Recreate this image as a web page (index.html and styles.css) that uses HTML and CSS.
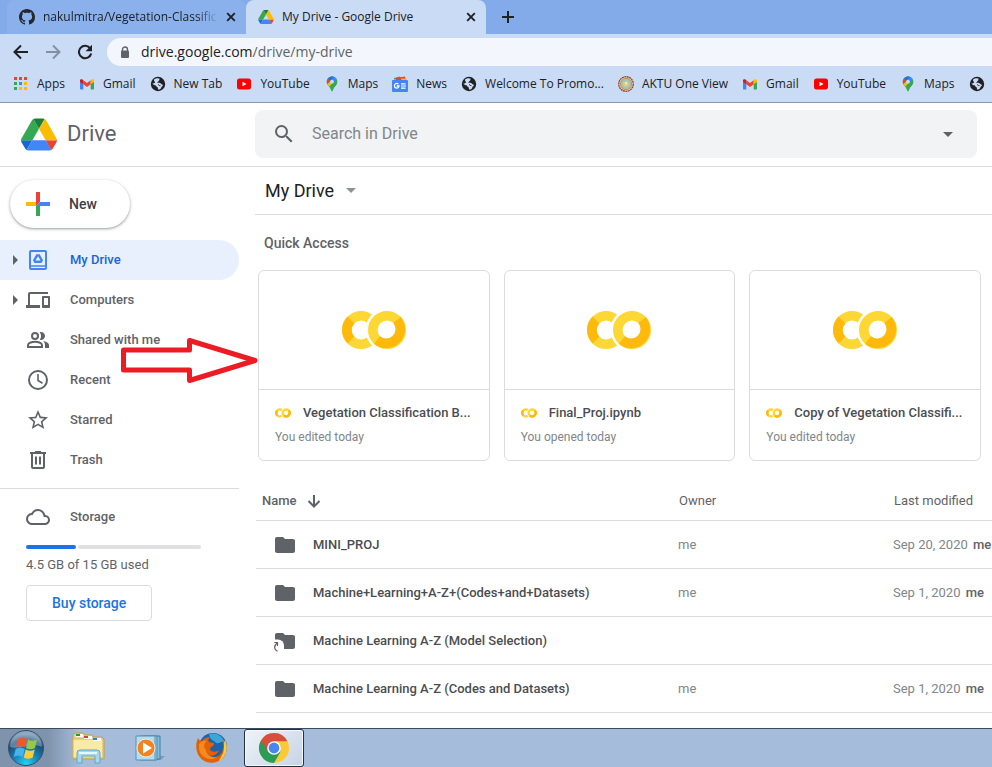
FILE: index.html
```html
<!DOCTYPE html>
<html lang="en">
<head>
<meta charset="utf-8">
<title>My Drive - Google Drive</title>
<link rel="stylesheet" href="styles.css">
</head>
<body>
<svg class="sprite" aria-hidden="true">
  <symbol id="drive" viewBox="0 0 87.3 78">
    <path d="m6.6 66.85 3.85 6.65c.8 1.4 1.95 2.5 3.3 3.3l13.75-23.8h-27.5c0 1.55.4 3.1 1.2 4.5z" fill="#1967d2"/>
    <path d="m43.65 25-13.75-23.8c-1.35.8-2.5 1.9-3.3 3.3l-25.4 44a9.06 9.06 0 0 0-1.2 4.5h27.5z" fill="#34a853"/>
    <path d="m73.55 76.8c1.35-.8 2.5-1.9 3.3-3.3l1.6-2.75 7.65-13.25c.8-1.4 1.2-2.95 1.2-4.5h-27.5l5.85 11.5z" fill="#ea4335"/>
    <path d="m43.65 25 13.75-23.8c-1.35-.8-2.9-1.2-4.5-1.2h-18.5c-1.6 0-3.15.45-4.5 1.2z" fill="#188038"/>
    <path d="m59.8 53h-32.3l-13.75 23.8c1.35.8 2.9 1.2 4.5 1.2h50.8c1.6 0 3.15-.45 4.5-1.2z" fill="#4285f4"/>
    <path d="m73.4 26.5-12.7-22c-.8-1.4-1.95-2.5-3.3-3.3l-13.75 23.8 16.15 28h27.45c0-1.55-.4-3.1-1.2-4.5z" fill="#fbbc04"/>
  </symbol>
  <symbol id="close" viewBox="0 0 10 10"><path d="M1.2 1.2l7.6 7.6M8.8 1.2L1.2 8.8" stroke="#202124" stroke-width="1.9"/></symbol>
  <symbol id="gmail" viewBox="0 0 16 16">
    <path d="M1 4v8.5c0 .6.400 1 1 1h2.300V6.500z" fill="#4285f4"/>
    <path d="M15 4v8.500c0 .6-.4 1-1 1h-2.300V6.500z" fill="#34a853"/>
    <path d="M4.300 4.300v4L8 11l3.700-2.700v-4L8 7z" fill="#ea4335"/>
    <path d="M1 4.200v1.700l3.300 2.400v-4l-.8-.7C2.500 2.700 1 3.200 1 4.200z" fill="#c5221f"/>
    <path d="M15 4.200v1.700l-3.300 2.400v-4l.8-.7c1-.9 2.500-.4 2.500.6z" fill="#fbbc04"/>
  </symbol>
  <symbol id="youtube" viewBox="0 0 16 16"><rect x="1" y="2.500" width="14" height="11" rx="2.500" fill="#f00"/><path d="M6.500 5.700v4.600l4-2.300z" fill="#fff"/></symbol>
  <symbol id="globe" viewBox="0 0 16 16">
    <circle cx="8" cy="8" r="7.200" fill="#202124"/>
    <path d="M4 3.500C6 1.800 8.700 2 9.800 2.700 9 3.400 9.700 4.300 8.700 4.900 7.600 5.400 7.800 6.500 7 6.900c1.500-.3 3.200-.2 4 .8.8.9 2 .4 1.800 1.800-.2 1-1.300.8-1.500 1.900-.2 1.200-1.500 2.300-3 2.200-.8-.2 0-1.500-.6-2.200C7 10.800 5.900 10.500 6 9.500 4.300 9.300 2.700 8.300 2.200 7.200c1.200.4 2.600.2 2.800-.6C5.400 5.600 3.500 5 4 3.500z" fill="#cadbf5"/>
    <path d="M8.500 8.400c-.4.700 1 1.400 1.900 1.200" stroke="#202124" fill="none"/>
  </symbol>
  <symbol id="maps" viewBox="0 0 16 16">
    <path d="M8 .5C5 .5 2.700 2.800 2.700 5.700c0 2.300 1.200 3.500 2.700 5.100C7 12.500 7.200 15.500 8 15.500s1-3 2.600-4.700c1.500-1.600 2.700-2.800 2.700-5.100C13.300 2.800 11 .5 8 .5z" fill="#34a853"/>
    <path d="M3.300 8c.5 1.200 1.300 2 2.100 2.800l4.300-5.100L8 4.200z" fill="#fbbc04"/>
    <path d="M4 2.400C2.700 4 2.400 6.100 3.300 8l3.200-3.700z" fill="#ea4335"/>
    <path d="M4 2.400C5.700.4 8 .1 9.800.8L6.500 4.700z" fill="#1a73e8"/>
    <path d="M9.800.8c1.400.5 2.400 1.400 3 2.700L9.600 7 6.500 4.700z" fill="#4285f4"/>
    <path d="M13 3.900c.9 3-.8 5-2.400 6.900C9.400 12 9 13.500 8.600 14.800 7.300 15 7.200 12.800 5.400 10.800z" fill="#34a853"/>
    <circle cx="8" cy="5.700" r="1.900" fill="#cadbf5"/>
  </symbol>
  <symbol id="news" viewBox="0 0 16 16">
    <path d="M2 2l6-1.500 2 3H2z" fill="#34a853"/><path d="M4 2l9-1.600 1 4H4z" fill="#ea4335"/><path d="M9 2.500h5.500V5H9z" fill="#fbbc04"/>
    <rect y="4" width="16" height="12" rx="1" fill="#4285f4"/>
    <path d="M6.400 8.200A2.300 2.300 0 1 0 7 10H4.700" stroke="#fff" stroke-width="1.300" fill="none"/><path d="M9 7.800h4.500M9 10h5M9 12.200h4.500" stroke="#fff" stroke-width="1.200"/>
  </symbol>
  <symbol id="seal" viewBox="0 0 16 16">
    <circle cx="8" cy="8" r="7.300" fill="#e4d4b0" stroke="#96403c" stroke-width="1.300" stroke-dasharray="2 .5"/><circle cx="8" cy="8" r="5.600" fill="#9ec4c8" stroke="#bf9540"/><circle cx="8" cy="8" r="2.700" fill="#e8cd72"/><circle cx="8" cy="7.300" r="1" fill="#fff5c8"/>
  </symbol>
  <symbol id="colab" viewBox="0 0 64 38">
    <g fill="none" stroke-width="9.600">
      <circle cx="19" cy="19" r="14.200" stroke="#fdd835"/><path d="M9 29A14.200 14.200 0 0 1 9 9" stroke="#ffb90a"/>
      <circle cx="45" cy="19" r="21.500" fill="#fff" stroke="none"/>
      <circle cx="45" cy="19" r="14.200" stroke="#fdd835"/><path d="M55 9A14.200 14.200 0 0 1 35 29" stroke="#ffb90a"/>
    </g>
  </symbol>
  <symbol id="folder" viewBox="0 0 24 24"><path d="M10 4H4c-1.100 0-2 .9-2 2v12c0 1.100.9 2 2 2h16c1.100 0 2-.9 2-2V8c0-1.100-.9-2-2-2h-8l-2-2z" fill="#5f6368"/></symbol>
  <symbol id="caret" viewBox="0 0 5 10"><path d="M0 0l5 5-5 5z" fill="#5f6368"/></symbol>
</svg>

<header class="browser">
  <div class="tabs">
    <div class="tab">
      <svg class="icon16" viewBox="0 0 16 16"><path fill="#24292e" d="M8 0C3.580 0 0 3.580 0 8c0 3.540 2.290 6.530 5.470 7.590.4.070.55-.17.55-.38 0-.19-.01-.82-.01-1.490-2.010.37-2.530-.49-2.690-.94-.09-.23-.48-.94-.82-1.130-.28-.15-.68-.52-.01-.53.63-.01 1.080.58 1.230.82.72 1.210 1.870.87 2.330.66.07-.52.28-.87.51-1.070-1.780-.2-3.640-.89-3.640-3.950 0-.87.31-1.590.82-2.150-.08-.2-.36-1.020.08-2.120 0 0 .67-.21 2.200.82.64-.18 1.320-.27 2-.27s1.360.09 2 .27c1.530-1.040 2.200-.82 2.200-.82.44 1.100.16 1.920.08 2.120.51.56.82 1.270.82 2.150 0 3.070-1.870 3.750-3.650 3.950.29.25.54.73.54 1.480 0 1.070-.01 1.930-.01 2.200 0 .21.15.46.55.38A8.010 8.010 0 0 0 16 8c0-4.420-3.580-8-8-8z"/></svg>
      <span class="tab-title faded">nakulmitra/Vegetation-Classificat</span>
      <button class="plain" aria-label="Close tab"><svg class="icon10"><use href="#close"/></svg></button>
    </div>
    <div class="tab active">
      <svg class="tab-drive"><use href="#drive"/></svg>
      <span class="tab-title">My Drive - Google Drive</span>
      <button class="plain" aria-label="Close tab"><svg class="icon10"><use href="#close"/></svg></button>
    </div>
    <button class="plain new-tab" aria-label="New tab"><svg width="12" height="12" viewBox="0 0 12 12"><path d="M6 0v12M0 6h12" stroke="#202124" stroke-width="2"/></svg></button>
  </div>
  <div class="toolbar">
    <button class="plain" aria-label="Back"><svg width="16" height="16" viewBox="0 0 16 16" fill="none" stroke="#202124" stroke-width="2"><path d="M15 8H2M8 1.500L1.500 8 8 14.500"/></svg></button>
    <button class="plain" aria-label="Forward"><svg width="16" height="16" viewBox="0 0 16 16" fill="none" stroke="#858fa1" stroke-width="2"><path d="M1 8h13M8 1.500L14.500 8 8 14.500"/></svg></button>
    <button class="plain" aria-label="Reload"><svg width="16" height="16" viewBox="0 0 16 16"><path d="M13.300 4.500A6.200 6.200 0 1 0 14.200 9.500" fill="none" stroke="#202124" stroke-width="2.100"/><path d="M15 .7v6.500H8.500z" fill="#202124"/></svg></button>
    <div class="omnibox">
      <svg width="10" height="13" viewBox="0 0 10 13"><path d="M2.500 6V3.500a2.500 2.500 0 0 1 5 0V6" fill="none" stroke="#5f6368" stroke-width="1.400"/><rect x="1" y="4.500" width="8" height="7.500" rx="1" fill="#5f6368"/></svg>
      <a class="url" href="#">drive.google.com<span>/drive/my-drive</span></a>
    </div>
  </div>
  <nav class="bookmarks" aria-label="Bookmarks">
    <a href="#"><svg class="icon16" viewBox="0 0 16 16"><path fill="#ea4335" d="M1 1h3v3H1zM6 1h3v3H6zM11 1h3v3h-3z"/><path fill="#34a853" d="M1 6h3v3H1zM1 11h3v3H1z"/><path fill="#4285f4" d="M6 6h3v3H6z"/><path fill="#fbbc04" d="M11 6h3v3h-3zM6 11h3v3H6zM11 11h3v3h-3z"/></svg>Apps</a>
    <a href="#"><svg class="icon16"><use href="#gmail"/></svg>Gmail</a>
    <a href="#"><svg class="icon16"><use href="#globe"/></svg>New Tab</a>
    <a href="#"><svg class="icon16"><use href="#youtube"/></svg>YouTube</a>
    <a href="#"><svg class="icon16"><use href="#maps"/></svg>Maps</a>
    <a href="#"><svg class="icon16"><use href="#news"/></svg>News</a>
    <a href="#"><svg class="icon16"><use href="#globe"/></svg>Welcome To Promo...</a>
    <a href="#"><svg class="icon16"><use href="#seal"/></svg>AKTU One View</a>
    <a href="#"><svg class="icon16"><use href="#gmail"/></svg>Gmail</a>
    <a href="#"><svg class="icon16"><use href="#youtube"/></svg>YouTube</a>
    <a href="#"><svg class="icon16"><use href="#maps"/></svg>Maps</a>
    <a href="#" aria-label="New tab"><svg class="icon16"><use href="#globe"/></svg></a>
  </nav>
</header>

<div class="app-bar">
  <a class="brand" href="#"><svg class="brand-logo"><use href="#drive"/></svg>Drive</a>
  <form class="search">
    <button class="plain" type="button" aria-label="Search"><svg width="24" height="24" viewBox="0 0 24 24"><path fill="#5f6368" d="M15.500 14h-.79l-.28-.27A6.471 6.471 0 0 0 16 9.500 6.500 6.500 0 1 0 9.500 16c1.610 0 3.090-.59 4.230-1.570l.27.28v.79l5 4.990L20.490 19l-4.990-5zm-6 0C7.010 14 5 11.990 5 9.500S7.010 5 9.500 5 14 7.010 14 9.500 11.990 14 9.500 14z"/></svg></button>
    <input type="search" aria-label="Search in Drive" placeholder="Search in Drive">
    <button class="plain" type="button" aria-label="Search options"><svg width="10" height="5" viewBox="0 0 10 5"><path d="M0 0h10L5 5z" fill="#5f6368"/></svg></button>
  </form>
</div>

<div class="workspace">
  <aside class="sidebar">
    <button class="new-button"><svg width="24" height="24" viewBox="0 0 24 24"><path d="M10 0h4v10l-4 4z" fill="#ea4335"/><path d="M14 10h10v4H10z" fill="#4285f4"/><path d="M10 14h4v10h-4z" fill="#34a853"/><path d="M0 10h10v4H0z" fill="#fbbc04"/></svg>New</button>
    <nav class="nav">
      <a class="current" href="#"><svg class="caret"><use href="#caret"/></svg><svg class="icon24" viewBox="0 0 24 24" fill="none" stroke="#4285f4" stroke-width="2"><rect x="4" y="3" width="16" height="18" rx="1"/><path d="M4 18h16" stroke-width="1.500"/><path d="M11 7.500h2l2.700 4.700-.9 1.600H9.200l-.9-1.600z" stroke-width="2.400"/></svg>My Drive</a>
      <a href="#"><svg class="caret"><use href="#caret"/></svg><svg class="icon24" viewBox="0 0 24 24"><path fill="#5f6368" d="M4 6h18V4H4c-1.100 0-2 .9-2 2v11H0v3h14v-3H4V6zm19 2h-6c-.55 0-1 .45-1 1v10c0 .55.45 1 1 1h6c.55 0 1-.45 1-1V9c0-.55-.45-1-1-1zm-1 9h-4v-7h4v7z"/></svg>Computers</a>
      <a href="#"><span class="caret"></span><svg class="icon24" viewBox="0 0 24 24"><g fill="none" stroke="#5f6368" stroke-width="2"><circle cx="9" cy="8" r="3"/><path d="M2 19v-2c0-2.200 4.500-3.300 7-3.300s7 1.100 7 3.300v2z"/></g><path d="M15 4c2.300 0 4 1.800 4 4s-1.700 4-4 4c-.4 0-.8-.1-1.200-.2C15.500 9.600 15.500 6.500 13.700 4.200 14.100 4.100 14.600 4 15 4zM17 13c2.700.5 6 1.800 6 4v3h-4v-3c0-1.600-.8-3-2-4z" fill="#5f6368"/></svg>Shared with me</a>
      <a href="#"><span class="caret"></span><svg class="icon24" viewBox="0 0 24 24" fill="none" stroke="#5f6368" stroke-width="2"><circle cx="12" cy="12" r="9"/><path d="M12 6v6.500l4.500 2.700" stroke-width="1.600"/></svg>Recent</a>
      <a href="#"><span class="caret"></span><svg class="icon24" viewBox="0 0 24 24"><path fill="#5f6368" d="M22 9.240l-7.190-.62L12 2 9.190 8.630 2 9.240l5.460 4.730L5.820 21 12 17.270 18.180 21l-1.630-7.030L22 9.240zM12 15.400l-3.760 2.270 1-4.280-3.320-2.880 4.380-.38L12 6.100l1.710 4.040 4.380.38-3.320 2.880 1 4.280L12 15.400z"/></svg>Starred</a>
      <a href="#"><span class="caret"></span><svg class="icon24" viewBox="0 0 24 24" fill="none" stroke="#5f6368" stroke-width="2"><path d="M4 5h16M9 4h6M6 5v14q0 1 1 1h10q1 0 1-1V5M10 8.500v8M14 8.500v8"/></svg>Trash</a>
    </nav>
    <section class="storage">
      <a class="storage-title" href="#"><svg class="icon24" viewBox="0 0 24 24"><path fill="#5f6368" d="M19.350 10.040A7.490 7.490 0 0 0 12 4C9.110 4 6.600 5.640 5.350 8.040A5.994 5.994 0 0 0 0 14c0 3.310 2.690 6 6 6h13c2.760 0 5-2.240 5-5 0-2.640-2.050-4.780-4.650-4.960zM19 18H6c-2.210 0-4-1.790-4-4 0-2.050 1.530-3.760 3.560-3.970l1.070-.11.5-.95A5.469 5.469 0 0 1 12 6c2.620 0 4.880 1.860 5.390 4.430l.3 1.500 1.530.11A2.980 2.980 0 0 1 22 15c0 1.650-1.350 3-3 3z"/></svg>Storage</a>
      <div class="meter"><span class="used"></span><span class="free"></span></div>
      <p>4.5 GB of 15 GB used</p>
      <button class="buy">Buy storage</button>
    </section>
    <svg class="pointer" viewBox="0 0 138 48" aria-hidden="true"><path d="M2.500 12h66V2.500L134 22.500l-65.500 20V32h-66z" fill="none" stroke="#ed1c24" stroke-width="5" stroke-linejoin="round"/></svg>
  </aside>

  <main class="content">
    <h1><button class="plain crumb">My Drive <svg width="10" height="5" viewBox="0 0 10 5"><path d="M0 0h10L5 5z" fill="#909396"/></svg></button></h1>
    <h2>Quick Access</h2>
    <div class="cards">
      <a class="card" href="#"><span class="preview"><svg class="colab"><use href="#colab"/></svg></span><span class="info"><span class="file"><svg class="colab-small"><use href="#colab"/></svg><span class="file-name">Vegetation Classification B...</span></span><span class="note">You edited today</span></span></a>
      <a class="card" href="#"><span class="preview"><svg class="colab"><use href="#colab"/></svg></span><span class="info"><span class="file"><svg class="colab-small"><use href="#colab"/></svg><span class="file-name">Final_Proj.ipynb</span></span><span class="note">You opened today</span></span></a>
      <a class="card" href="#"><span class="preview"><svg class="colab"><use href="#colab"/></svg></span><span class="info"><span class="file"><svg class="colab-small"><use href="#colab"/></svg><span class="file-name">Copy of Vegetation Classifi...</span></span><span class="note">You edited today</span></span></a>
    </div>
    <table class="files">
      <thead><tr><th class="col-name"><span class="sort">Name <svg width="14" height="14" viewBox="0 0 14 14" fill="none" stroke="#5f6368" stroke-width="2"><path d="M7 1v11M1.500 7L7 12.500 12.500 7"/></svg></span></th><th class="col-owner">Owner</th><th class="col-date">Last modified</th></tr></thead>
      <tbody>
        <tr><td><a class="folder" href="#"><svg class="icon24"><use href="#folder"/></svg>MINI_PROJ</a></td><td>me</td><td>Sep 20, 2020 <b>me</b></td></tr>
        <tr><td><a class="folder" href="#"><svg class="icon24"><use href="#folder"/></svg>Machine+Learning+A-Z+(Codes+and+Datasets)</a></td><td>me</td><td>Sep 1, 2020 <b>me</b></td></tr>
        <tr><td><a class="folder" href="#"><svg class="icon24" viewBox="0 0 24 24"><path d="M10 4H4c-1.100 0-2 .9-2 2v12c0 1.100.9 2 2 2h16c1.100 0 2-.9 2-2V8c0-1.100-.9-2-2-2h-8l-2-2z" fill="#5f6368"/><path d="M0 10.500h5a6 6 0 0 1 6 6V24H0z" fill="#fff"/><path d="M1.300 13.500h3.200v3.500M4.500 13.500C.5 17 .8 20.500 4.500 22.300" fill="none" stroke="#5f6368" stroke-width="1.200"/></svg>Machine Learning A-Z (Model Selection)</a></td><td></td><td></td></tr>
        <tr><td><a class="folder" href="#"><svg class="icon24"><use href="#folder"/></svg>Machine Learning A-Z (Codes and Datasets)</a></td><td>me</td><td>Sep 1, 2020 <b>me</b></td></tr>
      </tbody>
    </table>
  </main>
</div>

<footer class="taskbar">
  <button class="plain start" aria-label="Start">
    <svg width="38" height="38" viewBox="0 0 38 38">
      <defs><radialGradient id="orb" cx=".5" cy=".95" r=".9"><stop offset="0" stop-color="#25d4fa"/><stop offset=".4" stop-color="#1683b8"/><stop offset=".75" stop-color="#1d4a73"/><stop offset="1" stop-color="#8ba6bf"/></radialGradient></defs>
      <circle cx="19" cy="19" r="17.500" fill="url(#orb)" stroke="#344f6b"/><path d="M3 18C3-1 35-1 35 18 26 13 12 21 3 18z" fill="#bcd1e2" opacity=".4"/>
      <path d="M11 10c3-2 6-2 9 0l-2 8.500c-3-2-6-2-9 0z" fill="#f0582a"/><path d="M21 10.500c3 1.700 6 1.700 9 0L28 19c-3 1.700-6 1.700-9 0z" fill="#93c947"/><path d="M8.700 20c3-2 6-2 9 0l-2 8c-3-2-6-2-9 0z" fill="#4ab2ee"/><path d="M18.700 20.500c3 1.700 6 1.700 9 0l-2 8c-3 1.700-6 1.700-9 0z" fill="#fccc38"/>
    </svg>
  </button>
  <button class="plain task" aria-label="File Explorer">
    <svg width="34" height="32" viewBox="0 0 34 32">
      <path d="M2 3l2-2h8l2 2h7l1 2h9l2 2v20H2z" fill="#efd37c" stroke="#c69f43"/><path d="M2 7h30v19H2z" fill="#fbeaa4" stroke="#d7b65c"/><path d="M5 2h7v3H5zM13 4h8v3h-8zM22 6h8v3h-8z" fill="#fff"/><path d="M5 2h4v2H5z" fill="#19a038"/><path d="M13 4h4v2h-4z" fill="#d44328"/><path d="M22 6h4v2h-4z" fill="#2686d5"/>
      <path d="M6 31V21q0-3 3-3h17q3 0 3 3v10h-5v-7H11v7z" fill="#a6d8ed" stroke="#5ba8ca"/><path d="M8 21h18" stroke="#e5f8ff" stroke-width="2"/>
    </svg>
  </button>
  <button class="plain task" aria-label="Media Player">
    <svg width="32" height="28" viewBox="0 0 32 28"><path d="M22 22h9l-4 4h-6z" fill="#6683a3" opacity=".6"/><path d="M10 2h16v23H10z" fill="#80bfdf" stroke="#477d9f"/><path d="M6 2h17v24H6z" fill="#98d0e8" stroke="#4a86aa"/><path d="M2 2h19v24H2z" fill="#b3dced" stroke="#5993b4"/><circle cx="12" cy="14" r="9" fill="#f58220" stroke="#e7edf0"/><path d="M9 8.500v11l9-5.500z" fill="#fff"/></svg>
  </button>
  <button class="plain task" aria-label="Firefox">
    <svg width="32" height="32" viewBox="0 0 32 32">
      <circle cx="17" cy="15" r="14" fill="#1f62a8"/><path d="M13 2c6-2 14 1 16 9-4-4-6 3-10-1-2-2-5-2-6-8z" fill="#3fa4dc"/>
      <path d="M2 6c1 2 2 3 4 3 2-3 5-4 8-4-2 2-2 4-1 5 2 1 5 0 5 2s-4 3-4 5c1 4 7 3 9 1-2 6-8 7-12 4 5 6 15 3 16-5 1-4 0-7-1-10 5 5 6 14 1 19-7 7-19 6-24-2C-1 18 0 10 2 6z" fill="#e66000"/><path d="M29 8c4 8 1 17-6 21 2-5 5-7 5-14 0-3 0-5 1-7z" fill="#ffcb3d"/><path d="M3 12c2-3 5-4 8-3-3 2-4 6-1 9 0 5 6 8 11 7-7 5-17 0-18-8z" fill="#f58b20"/>
    </svg>
  </button>
  <button class="plain task running" aria-label="Chrome">
    <svg width="30" height="30" viewBox="0 0 30 30"><circle cx="15" cy="15" r="15" fill="#fbc936"/><path d="M15 15L2 7.500A15 15 0 0 0 15 30l6.500-11.300z" fill="#2b9c55"/><path d="M15 8.300h13.400A15 15 0 0 0 2 7.500l7.200 11z" fill="#da4c3e"/><circle cx="15" cy="15" r="6.800" fill="#fff"/><circle cx="15" cy="15" r="5.400" fill="#4a86f0"/></svg>
  </button>
</footer>
</body>
</html>
```
FILE: styles.css
```css
* { box-sizing: border-box; }

body {
  margin: 0;
  min-height: 100vh;
  display: flex;
  flex-direction: column;
  overflow-x: hidden;
  background: #fff;
  color: #5f6368;
  font: 13px/20px Roboto, "Liberation Sans", sans-serif;
}

a { color: inherit; text-decoration: none; }
button, input { font: inherit; color: inherit; }
svg { display: block; flex: none; }
h1, h2, p { margin: 0; font-weight: 400; }

.sprite { position: absolute; width: 0; height: 0; }
.icon10 { width: 10px; height: 10px; }
.icon16 { width: 16px; height: 16px; }
.icon24 { width: 24px; height: 24px; }

.plain {
  display: flex;
  align-items: center;
  justify-content: center;
  flex: none;
  padding: 0;
  border: 0;
  background: none;
}

/* Browser chrome */
.browser {
  background: #cadbf5;
  border-bottom: 1px solid #8796b3;
  color: #202124;
  font: 12px/16px "Open Sans", "Noto Sans", sans-serif;
}

.tabs {
  display: flex;
  height: 34px;
  padding-left: 7px;
  background: #84abe9;
}

.tab {
  display: flex;
  align-items: center;
  gap: 8px;
  flex: 0 1 239px;
  min-width: 0;
  padding: 0 10px 0 12px;
  border-radius: 8px 8px 0 0;
  background: #8bb1ed;
}

.tab.active { flex-basis: 240px; background: #cadbf5; }
.tab-drive { width: 16px; height: 14px; }

.tab-title {
  flex: 1;
  min-width: 0;
  overflow: hidden;
  white-space: nowrap;
}

.faded { mask-image: linear-gradient(to right, #000 88%, transparent); }
.new-tab { width: 44px; }

.toolbar {
  display: flex;
  align-items: center;
  gap: 16px;
  height: 36px;
  padding-left: 13px;
}

.omnibox {
  display: flex;
  align-items: center;
  flex: 1;
  gap: 11px;
  height: 28px;
  margin-right: -20px;
  margin-left: -2px;
  padding-left: 13px;
  border-radius: 14px;
  background: #f3f7fd;
  font-size: 14px;
}

.url span { color: #5f6368; }

.bookmarks {
  display: flex;
  align-items: center;
  gap: 14px;
  height: 32px;
  padding: 0 0 4px 13px;
  white-space: nowrap;
  overflow: hidden;
}

.bookmarks a { display: flex; align-items: center; flex: none; gap: 8px; }

/* Drive header */
.app-bar {
  display: flex;
  align-items: center;
  height: 64px;
  padding: 0 15px 1px 0;
  border-bottom: 1px solid #dadce0;
}

.brand {
  display: flex;
  align-items: center;
  gap: 10px;
  flex: 0 0 255px;
  padding-left: 21px;
  font-size: 22px;
}

.brand-logo { width: 36px; height: 33px; }

.search {
  display: flex;
  align-items: center;
  flex: 1;
  gap: 16px;
  height: 48px;
  padding: 0 24px 0 17px;
  border-radius: 8px;
  background: #f1f3f4;
}

.search input {
  flex: 1;
  min-width: 0;
  padding: 0;
  border: 0;
  outline: 0;
  background: none;
  font-size: 16px;
}

.search input::placeholder { color: #80868b; opacity: 1; }

/* Layout */
.workspace { display: flex; flex: 1; }
.sidebar { position: relative; flex: 0 0 239px; padding-top: 13px; }
.content { flex: 1; min-width: 0; padding-left: 16px; }

/* Sidebar */
.new-button {
  display: flex;
  align-items: center;
  gap: 19px;
  height: 48px;
  margin: 0 0 12px 10px;
  padding: 0 33px 0 16px;
  border: 0;
  border-radius: 24px;
  background: #fff;
  box-shadow: 0 1px 2px rgba(60, 64, 67, .35), 0 1px 3px 1px rgba(60, 64, 67, .15);
  color: #3c4043;
  font-size: 14px;
  font-weight: 500;
}

.nav a {
  display: flex;
  align-items: center;
  height: 40px;
  padding-left: 13px;
  border-radius: 0 20px 20px 0;
  font-weight: 500;
}

.nav .current { background: #e8f0fe; color: #1967d2; }
.caret { width: 5px; height: 10px; margin-right: 8px; }
.nav .icon24 { margin-right: 20px; }

.storage {
  margin-top: 8px;
  padding: 16px 38px 0 26px;
  border-top: 1px solid #dadce0;
}

.storage-title { display: flex; align-items: center; gap: 20px; height: 24px; font-weight: 500; }
.meter { display: flex; gap: 2px; height: 4px; margin: 16px 0 6px; }
.used { flex: 29; border-radius: 2px; background: #1a73e8; }
.free { flex: 71; border-radius: 2px; background: #e0e0e0; }

.buy {
  height: 36px;
  margin-top: 10px;
  padding: 0 25px;
  border: 1px solid #dadce0;
  border-radius: 4px;
  background: #fff;
  color: #1a73e8;
  font-size: 14px;
  font-weight: 500;
}

.pointer { position: absolute; top: 171px; left: 121px; width: 138px; height: 48px; z-index: 1; }

/* Content */
h1 {
  display: flex;
  align-items: center;
  height: 48px;
  padding-left: 10px;
  border-bottom: 1px solid #dadce0;
  color: #202124;
  font-size: 18px;
}

.crumb { gap: 12px; }
h2 { padding: 18px 9px 17px; font-size: 14px; font-weight: 500; }

.cards {
  display: grid;
  grid-template-columns: repeat(3, minmax(0, 1fr));
  gap: 14px;
  padding: 0 11px 0 3px;
}

.card { border: 1px solid #dadce0; border-radius: 6px; }

.preview {
  display: flex;
  align-items: center;
  justify-content: center;
  height: 119px;
  border-bottom: 1px solid #dadce0;
}

.colab { width: 64px; height: 38px; }
.colab-small { width: 16px; height: 10px; }
.info { display: block; padding: 11px 16px; }
.file { display: flex; align-items: center; gap: 12px; height: 24px; color: #4a4d51; font-weight: 500; }
.file-name { flex: none; white-space: nowrap; }
.note { display: block; height: 24px; line-height: 24px; color: #80868b; font-size: 12px; }

/* File list */
.files {
  width: calc(100% - 1px);
  margin: 20px 0 0 1px;
  border-collapse: separate;
  border-spacing: 0;
  table-layout: fixed;
}

.files th, .files td {
  height: 48px;
  padding: 1px 0 0;
  border-bottom: 1px solid #dadce0;
  text-align: left;
  white-space: nowrap;
}

.files th { height: 40px; font-weight: 400; }
.files th + th { padding-left: 1px; }
.files td { color: #80868b; }
.col-owner { width: 215px; }
.col-date { width: 99px; }
.files b { margin-left: 2px; color: #5f6368; font-weight: 500; }
.sort { display: flex; align-items: center; gap: 10px; padding-left: 6px; font-weight: 500; }
.folder { display: flex; align-items: center; gap: 16px; padding-left: 17px; color: #4a4d51; font-weight: 500; }

/* Taskbar */
.taskbar {
  display: flex;
  height: 39px;
  border-top: 1px solid #3b4a5c;
  background: linear-gradient(to right, #8093ac 48px, #a5bddb 80px);
  overflow: hidden;
}

.start { width: 52px; }
.task { width: 60px; margin-left: 2px; }
.task:nth-child(2) { margin-left: 6px; }
.task.running {
  border: 1px solid #222f40;
  border-radius: 3px;
  background: linear-gradient(135deg, #eef3f8, #c6d4e5);
  box-shadow: inset 0 0 0 1px #f5f9fc;
}
```
